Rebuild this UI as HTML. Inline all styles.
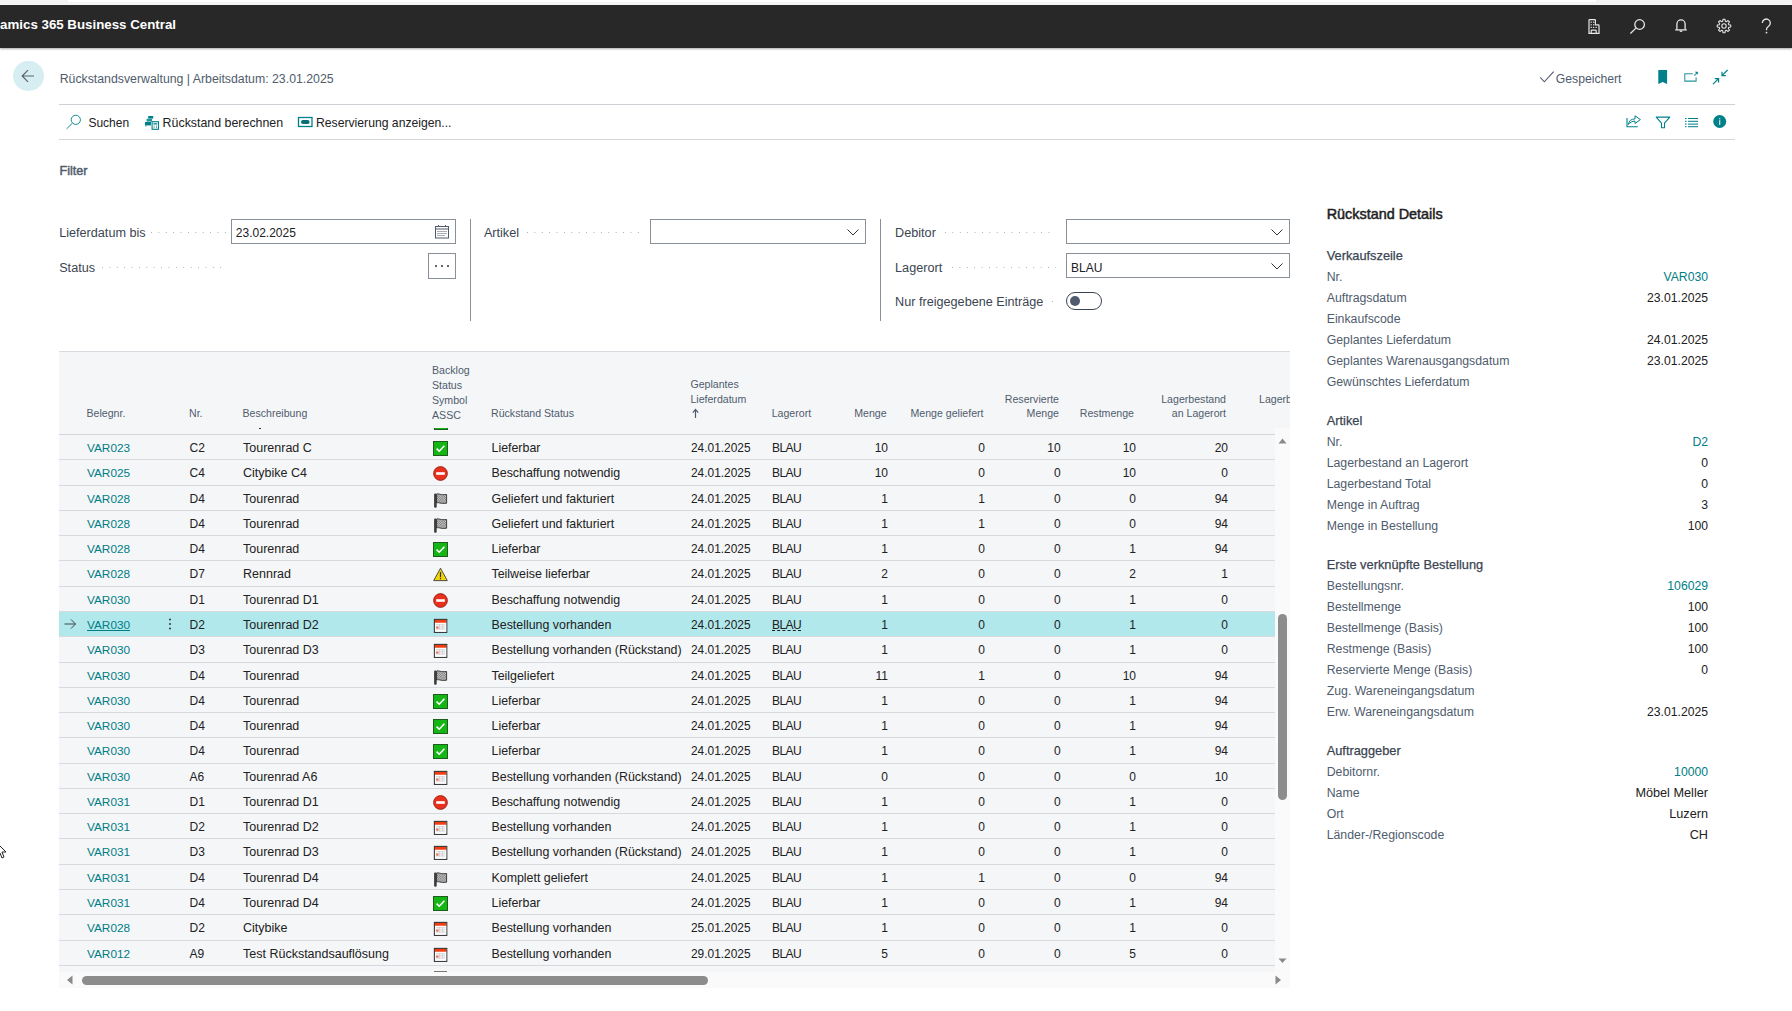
<!DOCTYPE html>
<html><head><meta charset="utf-8"><title>Rückstandsverwaltung</title>
<style>
html,body{margin:0;padding:0;}
body{width:1792px;height:1011px;overflow:hidden;position:relative;background:#fff;font-family:'Liberation Sans', sans-serif;}
.t{position:absolute;white-space:nowrap;line-height:20px;font-family:'Liberation Sans', sans-serif;}
svg{display:block}
</style></head><body>
<svg width="0" height="0" style="position:absolute"><defs><pattern id="chk" width="2.4" height="2.4" patternUnits="userSpaceOnUse"><rect width="2.4" height="2.4" fill="#d6d6d6"/><rect width="1.2" height="1.2" fill="#6e6e6e"/><rect x="1.2" y="1.2" width="1.2" height="1.2" fill="#6e6e6e"/></pattern></defs></svg>
<div style="position:absolute;left:0px;top:0px;width:1792px;height:5px;background:#f3f3f3"></div>
<div style="position:absolute;left:68px;top:0px;width:1528px;height:1.5px;background:#fff"></div>
<div style="position:absolute;left:0px;top:4px;width:1792px;height:1px;background:#fafafa"></div>
<div style="position:absolute;left:0px;top:5px;width:1792px;height:43px;background:#282828;box-shadow:0 1px 2px rgba(0,0,0,.35)"></div>
<div class="t" style="right:1616px;top:15px;font-size:13.3px;line-height:20px;color:#fff;font-weight:bold;white-space:nowrap">Dynamics 365 Business Central</div>
<svg style="position:absolute;left:1587px;top:18.2px" width="14" height="17" viewBox="0 0 14 17"><g fill="none" stroke="#e6e6e6" stroke-width="1.2"><path d="M2 15.4V2.2q0-.6.6-.6h5.2q.6 0 .6.6v4.6h3q.6 0 .6.6v8z"/><path d="M4.2 15.2v-2.2q0-.8.8-.8h3.4q.8 0 .8.8v2.2"/></g><g fill="#e6e6e6"><rect x="3.6" y="3.6" width="1.2" height="1.2"/><rect x="6" y="3.6" width="1.2" height="1.2"/><rect x="3.6" y="6.2" width="1.2" height="1.2"/><rect x="6" y="6.2" width="1.2" height="1.2"/><rect x="3.6" y="8.8" width="1.2" height="1.2"/><rect x="6" y="8.8" width="1.2" height="1.2"/><rect x="8.6" y="8.8" width="1.2" height="1.2"/></g></svg>
<svg style="position:absolute;left:1629px;top:17.5px" width="18" height="17" viewBox="0 0 18 17"><g fill="none" stroke="#e6e6e6" stroke-width="1.3"><circle cx="10.6" cy="6.5" r="4.8"/><path d="M7.2 9.9L1.4 15.5"/></g></svg>
<svg style="position:absolute;left:1673px;top:18.4px" width="16" height="15" viewBox="0 0 16 15"><g fill="none" stroke="#e6e6e6" stroke-width="1.3"><path d="M3.9 11.4V6a4.1 4.1 0 0 1 8.2 0v5.4"/><path d="M2.2 11.9h11.6"/></g><path d="M6.5 12.6h3a1.5 1.5 0 0 1-3 0z" fill="#e6e6e6"/></svg>
<svg style="position:absolute;left:1716px;top:18px" width="16" height="16" viewBox="0 0 16 16"><g fill="none" stroke="#e6e6e6" stroke-width="1.1"><polygon points="12.83,6.71 14.72,6.98 14.72,9.02 12.83,9.29 12.33,10.51 13.47,12.04 12.04,13.47 10.51,12.33 9.29,12.83 9.02,14.72 6.98,14.72 6.71,12.83 5.49,12.33 3.96,13.47 2.53,12.04 3.67,10.51 3.17,9.29 1.28,9.02 1.28,6.98 3.17,6.71 3.67,5.49 2.53,3.96 3.96,2.53 5.49,3.67 6.71,3.17 6.98,1.28 9.02,1.28 9.29,3.17 10.51,3.67 12.04,2.53 13.47,3.96 12.33,5.49" stroke-linejoin="round"/><circle cx="8" cy="8" r="2.2"/></g></svg>
<svg style="position:absolute;left:1760px;top:18px" width="13" height="16" viewBox="0 0 13 16"><g fill="none" stroke="#e6e6e6" stroke-width="1.3"><path d="M2.3 5a4 4 0 1 1 6.3 3.3c-1.3.9-2.1 1.6-2.1 3.2v.8"/></g><circle cx="6.5" cy="14.6" r=".9" fill="#e6e6e6"/></svg>
<div style="position:absolute;left:13.3px;top:61px;width:30.4px;height:30.4px;border-radius:50%;background:#d6eef1"></div>
<svg style="position:absolute;left:20px;top:68px" width="16" height="16" viewBox="0 0 16 16"><g fill="none" stroke="#5a6470" stroke-width="1.2"><path d="M14 8H2.5M8 2.2L2.2 8 8 13.8"/></g></svg>
<div class="t" style="left:59.70px;top:68.50px;font-size:12.3px;color:#505c6d;font-weight:normal;">Rückstandsverwaltung | Arbeitsdatum: 23.01.2025</div>
<svg style="position:absolute;left:1539px;top:70px" width="16" height="14" viewBox="0 0 16 14"><path d="M1.2 7.4l4.2 4.4L14.6 1.6" fill="none" stroke="#505c6d" stroke-width="1.1"/></svg>
<div class="t" style="left:1555.80px;top:68.50px;font-size:12.2px;color:#505c6d;font-weight:normal;">Gespeichert</div>
<svg style="position:absolute;left:1657px;top:69px" width="11" height="16" viewBox="0 0 11 16"><path d="M1.3 1h8.8v14L5.7 13 1.3 15z" fill="#00818a"/></svg>
<svg style="position:absolute;left:1683px;top:70px" width="17" height="14" viewBox="0 0 17 14"><g fill="none" stroke="#00818a" stroke-width="1.05" stroke-opacity="0.85"><path d="M9.7 3.7H1.8v7.4h11.3V7.3"/><path d="M11.2 5.6l2.8-2.7"/></g><path d="M11.8 1.8h3v3z" fill="#00818a"/></svg>
<svg style="position:absolute;left:1712px;top:69px" width="17" height="16" viewBox="0 0 17 16"><g fill="none" stroke="#00818a" stroke-width="1.2"><path d="M15.6 1L10 6.6M10 2.8v3.8h3.8"/><path d="M1 15.2l5.6-5.6M2.8 9.6h3.8v3.8"/></g></svg>
<div style="position:absolute;left:59px;top:104px;width:1676px;height:1px;background:#cdd1d5"></div>
<div style="position:absolute;left:59px;top:139px;width:1676px;height:1px;background:#d3d6da"></div>
<svg style="position:absolute;left:65px;top:113px" width="18" height="18" viewBox="0 0 18 18"><g fill="none" stroke="#1b8a94" stroke-width="1.0"><circle cx="10.8" cy="6.8" r="4.6"/><path d="M7.5 10.1L1.6 15.9"/></g></svg>
<div class="t" style="left:88.40px;top:112.50px;font-size:12.0px;color:#212121;font-weight:normal;">Suchen</div>
<svg style="position:absolute;left:144px;top:115px" width="16" height="15" viewBox="0 0 16 15"><g fill="#00818a"><rect x="4.2" y="1" width="5" height="2.6"/><rect x="2.6" y="3.8" width="5.4" height="2.8" opacity="0.85"/><rect x="1" y="7" width="6" height="3.4"/><rect x="1" y="10.6" width="2" height="0.8" opacity="0.6"/></g><rect x="8.1" y="6.7" width="6.4" height="7.6" fill="#fff" stroke="#00818a" stroke-width="1.1"/><g fill="#00818a" opacity="0.8"><rect x="9.4" y="8" width="3.8" height="1.6"/><rect x="9.6" y="10.6" width="1" height="1"/><rect x="12" y="10.6" width="1" height="1"/><rect x="9.6" y="12.2" width="1" height="1"/><rect x="12" y="12.2" width="1" height="1"/></g></svg>
<div class="t" style="left:162.60px;top:112.50px;font-size:12.4px;color:#212121;font-weight:normal;">Rückstand berechnen</div>
<svg style="position:absolute;left:297px;top:116px" width="17" height="12" viewBox="0 0 17 12"><rect x="1.5" y="1.5" width="13.5" height="9" fill="none" stroke="#00818a" stroke-width="1.3"/><rect x="4" y="4" width="8.6" height="4" rx="2" fill="#0b6f77"/></svg>
<div class="t" style="left:316.00px;top:112.50px;font-size:12.2px;color:#212121;font-weight:normal;">Reservierung anzeigen...</div>
<svg style="position:absolute;left:1625px;top:114px" width="17" height="15" viewBox="0 0 17 15"><path d="M2 4v8.8h10.8" fill="none" stroke="#00818a" stroke-width="1.1"/><path d="M3.4 10.4C3.9 6.9 6.2 4.9 10 4.9V1.8L15.4 5.6 10 9.5V7.1C7.4 7.1 5.3 8.3 3.4 10.4z" fill="none" stroke="#00818a" stroke-width="1" stroke-linejoin="round"/></svg>
<svg style="position:absolute;left:1655px;top:115px" width="16" height="14" viewBox="0 0 16 14"><path d="M1.2 2.1h13.6L9.5 8.1v4.7H6.5V8.1z" fill="none" stroke="#00818a" stroke-width="1.1" stroke-linejoin="round"/></svg>
<svg style="position:absolute;left:1684px;top:117px" width="15" height="11" viewBox="0 0 15 11"><g fill="#00818a"><rect x="1" y="1" width="1.6" height="1"/><rect x="4" y="1" width="10" height="1"/><rect x="1" y="3.8" width="1.6" height="1"/><rect x="4" y="3.8" width="10" height="1"/><rect x="1" y="6.6" width="1.6" height="1"/><rect x="4" y="6.6" width="10" height="1"/><rect x="1" y="9.2" width="1.6" height="1"/><rect x="4" y="9.2" width="10" height="1"/></g></svg>
<svg style="position:absolute;left:1713px;top:115px" width="14" height="14" viewBox="0 0 14 14"><circle cx="6.7" cy="6.5" r="6.5" fill="#00818a"/><rect x="6.1" y="3.2" width="1.2" height="1.2" fill="#cfe9ec"/><rect x="6.1" y="5.2" width="1.2" height="4.8" fill="#cfe9ec"/></svg>
<div class="t" style="left:59.50px;top:160.50px;font-size:12.6px;color:#505c6d;font-weight:normal;-webkit-text-stroke:0.45px #505c6d;">Filter</div>
<div class="t" style="left:59.20px;top:222.50px;font-size:12.65px;color:#3b4552;font-weight:normal;">Lieferdatum bis</div>
<div style="position:absolute;left:151px;top:232px;width:75px;height:1px;background-image:linear-gradient(to right,#a9aeb4 1px,transparent 1px);background-size:7.4px 1px"></div>
<div style="position:absolute;left:231px;top:219px;width:223px;height:23px;border:1px solid #8a9099;background:#fff"></div>
<div class="t" style="left:235.80px;top:222.50px;font-size:12px;color:#212121;font-weight:normal;">23.02.2025</div>
<svg style="position:absolute;left:434px;top:224px" width="16" height="16" viewBox="0 0 16 16"><g fill="none" stroke="#505c6d" stroke-width="1"><rect x="1.5" y="2.5" width="13" height="11.5"/><path d="M1.5 5h13"/><path d="M4.5 1v2M11.5 1v2"/></g><g fill="#505c6d"><rect x="3.5" y="7" width="1" height="1"/><rect x="5.5" y="7" width="1" height="1"/><rect x="7.5" y="7" width="1" height="1"/><rect x="9.5" y="7" width="1" height="1"/><rect x="11.5" y="7" width="1" height="1"/><rect x="3.5" y="9" width="1" height="1"/><rect x="5.5" y="9" width="1" height="1"/><rect x="7.5" y="9" width="1" height="1"/><rect x="9.5" y="9" width="1" height="1"/><rect x="11.5" y="9" width="1" height="1"/><rect x="3.5" y="11" width="1" height="1"/><rect x="5.5" y="11" width="1" height="1"/><rect x="7.5" y="11" width="1" height="1"/><rect x="9.5" y="11" width="1" height="1"/></g></svg>
<div class="t" style="left:59.20px;top:257.50px;font-size:12.65px;color:#3b4552;font-weight:normal;">Status</div>
<div style="position:absolute;left:102px;top:267px;width:124px;height:1px;background-image:linear-gradient(to right,#a9aeb4 1px,transparent 1px);background-size:7.4px 1px"></div>
<div style="position:absolute;left:428px;top:253px;width:26px;height:24px;border:1px solid #8a9099;background:#fff"></div>
<svg style="position:absolute;left:432px;top:261px" width="20" height="10" viewBox="0 0 20 10"><g fill="#333"><circle cx="4" cy="5" r="1"/><circle cx="10" cy="5" r="1"/><circle cx="16" cy="5" r="1"/></g></svg>
<div style="position:absolute;left:470px;top:219px;width:1px;height:102px;background:#8a9099"></div>
<div class="t" style="left:483.90px;top:222.50px;font-size:12.65px;color:#3b4552;font-weight:normal;">Artikel</div>
<div style="position:absolute;left:527px;top:232px;width:118px;height:1px;background-image:linear-gradient(to right,#a9aeb4 1px,transparent 1px);background-size:7.4px 1px"></div>
<div style="position:absolute;left:650px;top:219px;width:214px;height:23px;border:1px solid #8a9099;background:#fff"></div>
<svg style="position:absolute;left:846px;top:227px" width="14" height="10" viewBox="0 0 14 10"><path d="M1.5 2.5l5.5 5.5 5.5-5.5" fill="none" stroke="#333" stroke-width="1"/></svg>
<div style="position:absolute;left:880px;top:219px;width:1px;height:102px;background:#8a9099"></div>
<div class="t" style="left:895.10px;top:222.50px;font-size:12.65px;color:#3b4552;font-weight:normal;">Debitor</div>
<div style="position:absolute;left:945px;top:232px;width:111px;height:1px;background-image:linear-gradient(to right,#a9aeb4 1px,transparent 1px);background-size:7.4px 1px"></div>
<div style="position:absolute;left:1066px;top:219px;width:222px;height:23px;border:1px solid #8a9099;background:#fff"></div>
<svg style="position:absolute;left:1270px;top:227px" width="14" height="10" viewBox="0 0 14 10"><path d="M1.5 2.5l5.5 5.5 5.5-5.5" fill="none" stroke="#333" stroke-width="1"/></svg>
<div class="t" style="left:895.10px;top:257.50px;font-size:12.65px;color:#3b4552;font-weight:normal;">Lagerort</div>
<div style="position:absolute;left:952px;top:267px;width:104px;height:1px;background-image:linear-gradient(to right,#a9aeb4 1px,transparent 1px);background-size:7.4px 1px"></div>
<div style="position:absolute;left:1066px;top:253px;width:222px;height:23px;border:1px solid #8a9099;background:#fff"></div>
<div class="t" style="left:1071.00px;top:257.50px;font-size:12px;color:#212121;font-weight:normal;">BLAU</div>
<svg style="position:absolute;left:1270px;top:261px" width="14" height="10" viewBox="0 0 14 10"><path d="M1.5 2.5l5.5 5.5 5.5-5.5" fill="none" stroke="#333" stroke-width="1"/></svg>
<div class="t" style="left:895.10px;top:291.50px;font-size:12.65px;color:#3b4552;font-weight:normal;">Nur freigegebene Einträge</div>
<div style="position:absolute;left:1052px;top:301px;width:4px;height:1px;background-image:linear-gradient(to right,#a9aeb4 1px,transparent 1px);background-size:7.4px 1px"></div>
<div style="position:absolute;left:1066px;top:292px;width:34px;height:16px;border:1px solid #3b4552;border-radius:9px;background:#fff"></div>
<div style="position:absolute;left:1069.5px;top:295.5px;width:10.5px;height:10.5px;border-radius:50%;background:#505c6d"></div>
<div style="position:absolute;left:59px;top:351px;width:1231px;height:637px;background:#f5f6f8"></div>
<div style="position:absolute;left:59px;top:351px;width:1231px;height:1px;background:#d8dbdf"></div>
<div class="t" style="left:86.50px;top:403.30px;font-size:10.6px;color:#505c6d;font-weight:normal;">Belegnr.</div>
<div class="t" style="left:189.00px;top:403.30px;font-size:10.6px;color:#505c6d;font-weight:normal;">Nr.</div>
<div class="t" style="left:242.50px;top:403.30px;font-size:10.6px;color:#505c6d;font-weight:normal;">Beschreibung</div>
<div class="t" style="left:432.00px;top:360.30px;font-size:10.6px;color:#505c6d;font-weight:normal;">Backlog</div>
<div class="t" style="left:432.00px;top:375.30px;font-size:10.6px;color:#505c6d;font-weight:normal;">Status</div>
<div class="t" style="left:432.00px;top:390.30px;font-size:10.6px;color:#505c6d;font-weight:normal;">Symbol</div>
<div class="t" style="left:432.00px;top:405.30px;font-size:10.6px;color:#505c6d;font-weight:normal;">ASSC</div>
<div class="t" style="left:491.00px;top:403.30px;font-size:10.6px;color:#505c6d;font-weight:normal;">Rückstand Status</div>
<div class="t" style="left:690.40px;top:373.80px;font-size:10.6px;color:#505c6d;font-weight:normal;">Geplantes</div>
<div class="t" style="left:690.40px;top:388.80px;font-size:10.6px;color:#505c6d;font-weight:normal;">Lieferdatum</div>
<svg style="position:absolute;left:691px;top:407.5px" width="9" height="11" viewBox="0 0 9 11"><path d="M4.5 10V2M1.8 4.6L4.5 1.4 7.2 4.6" fill="none" stroke="#505c6d" stroke-width="1.2"/></svg>
<div class="t" style="left:771.70px;top:403.30px;font-size:10.6px;color:#505c6d;font-weight:normal;">Lagerort</div>
<div class="t" style="right:905.40px;top:403.30px;font-size:10.6px;color:#505c6d;font-weight:normal;text-align:right;">Menge</div>
<div class="t" style="right:808.50px;top:403.30px;font-size:10.6px;color:#505c6d;font-weight:normal;text-align:right;">Menge geliefert</div>
<div class="t" style="right:733.00px;top:388.80px;font-size:10.6px;color:#505c6d;font-weight:normal;text-align:right;">Reservierte</div>
<div class="t" style="right:733.00px;top:403.30px;font-size:10.6px;color:#505c6d;font-weight:normal;text-align:right;">Menge</div>
<div class="t" style="right:658.00px;top:403.30px;font-size:10.6px;color:#505c6d;font-weight:normal;text-align:right;">Restmenge</div>
<div class="t" style="right:566.00px;top:388.80px;font-size:10.6px;color:#505c6d;font-weight:normal;text-align:right;">Lagerbestand</div>
<div class="t" style="right:566.00px;top:403.30px;font-size:10.6px;color:#505c6d;font-weight:normal;text-align:right;">an Lagerort</div>
<div style="position:absolute;left:1259px;top:388.8px;width:31px;height:20px;overflow:hidden;white-space:nowrap;font-family:'Liberation Sans', sans-serif;font-size:10.6px;line-height:20px;color:#505c6d">Lagerbestand</div>
<div style="position:absolute;left:59px;top:434px;width:1216px;height:1px;background:#d3d6da"></div>
<div style="position:absolute;left:59px;top:459px;width:1216px;height:1px;background:#d6d9dd"></div>
<div class="t" style="left:87.00px;top:437.80px;font-size:11.8px;color:#007d85;font-weight:normal;">VAR023</div>
<div class="t" style="left:189.50px;top:437.80px;font-size:12px;color:#212121;font-weight:normal;">C2</div>
<div class="t" style="left:243.00px;top:437.80px;font-size:12.5px;color:#212121;font-weight:normal;">Tourenrad C</div>
<svg style="position:absolute;left:433px;top:440.6px" width="15" height="15" viewBox="0 0 15 15"><rect x="0.5" y="0.5" width="14" height="14" fill="#16b516" stroke="#1d5e1d" stroke-width="1"/><path d="M3.6 7.6l2.6 2.6 5.2-5.4" fill="none" stroke="#fff" stroke-width="1.6"/></svg>
<div class="t" style="left:491.50px;top:437.80px;font-size:12.4px;color:#212121;font-weight:normal;">Lieferbar</div>
<div class="t" style="left:691.00px;top:437.80px;font-size:11.9px;color:#212121;font-weight:normal;">24.01.2025</div>
<div class="t" style="left:772.00px;top:437.80px;font-size:12px;color:#212121;font-weight:normal;letter-spacing:-0.55px;">BLAU</div>
<div class="t" style="right:904.00px;top:437.80px;font-size:12px;color:#212121;font-weight:normal;text-align:right;">10</div>
<div class="t" style="right:807.00px;top:437.80px;font-size:12px;color:#212121;font-weight:normal;text-align:right;">0</div>
<div class="t" style="right:731.40px;top:437.80px;font-size:12px;color:#212121;font-weight:normal;text-align:right;">10</div>
<div class="t" style="right:656.00px;top:437.80px;font-size:12px;color:#212121;font-weight:normal;text-align:right;">10</div>
<div class="t" style="right:564.00px;top:437.80px;font-size:12px;color:#212121;font-weight:normal;text-align:right;">20</div>
<div style="position:absolute;left:59px;top:485px;width:1216px;height:1px;background:#d6d9dd"></div>
<div class="t" style="left:87.00px;top:463.30px;font-size:11.8px;color:#007d85;font-weight:normal;">VAR025</div>
<div class="t" style="left:189.50px;top:463.30px;font-size:12px;color:#212121;font-weight:normal;">C4</div>
<div class="t" style="left:243.00px;top:463.30px;font-size:12.5px;color:#212121;font-weight:normal;">Citybike C4</div>
<svg style="position:absolute;left:433px;top:465.6px" width="15" height="15" viewBox="0 0 15 15"><circle cx="7.5" cy="7.5" r="6.9" fill="#e8301c" stroke="#8a1a10" stroke-width="0.8"/><rect x="3.2" y="6.2" width="8.6" height="2.6" fill="#fff"/></svg>
<div class="t" style="left:491.50px;top:463.30px;font-size:12.4px;color:#212121;font-weight:normal;">Beschaffung notwendig</div>
<div class="t" style="left:691.00px;top:463.30px;font-size:11.9px;color:#212121;font-weight:normal;">24.01.2025</div>
<div class="t" style="left:772.00px;top:463.30px;font-size:12px;color:#212121;font-weight:normal;letter-spacing:-0.55px;">BLAU</div>
<div class="t" style="right:904.00px;top:463.30px;font-size:12px;color:#212121;font-weight:normal;text-align:right;">10</div>
<div class="t" style="right:807.00px;top:463.30px;font-size:12px;color:#212121;font-weight:normal;text-align:right;">0</div>
<div class="t" style="right:731.40px;top:463.30px;font-size:12px;color:#212121;font-weight:normal;text-align:right;">0</div>
<div class="t" style="right:656.00px;top:463.30px;font-size:12px;color:#212121;font-weight:normal;text-align:right;">10</div>
<div class="t" style="right:564.00px;top:463.30px;font-size:12px;color:#212121;font-weight:normal;text-align:right;">0</div>
<div style="position:absolute;left:59px;top:510px;width:1216px;height:1px;background:#d6d9dd"></div>
<div class="t" style="left:87.00px;top:488.80px;font-size:11.8px;color:#007d85;font-weight:normal;">VAR028</div>
<div class="t" style="left:189.50px;top:488.80px;font-size:12px;color:#212121;font-weight:normal;">D4</div>
<div class="t" style="left:243.00px;top:488.80px;font-size:12.5px;color:#212121;font-weight:normal;">Tourenrad</div>
<svg style="position:absolute;left:433px;top:491.6px" width="15" height="16" viewBox="0 0 15 16"><rect x="1.1" y="1.4" width="2.6" height="14.4" rx="1.1" fill="#3c3c3c"/><path d="M3.6 2.2c1.2-.7 2.4-.2 3.6.1 1.6.4 3.2.4 6.4 0.2v8.7c-3 .4-5.2.2-6.6-.2-1.2-.3-2.2-.5-3.4 0z" fill="url(#chk)" stroke="#2e2e2e" stroke-width="0.9"/></svg>
<div class="t" style="left:491.50px;top:488.80px;font-size:12.4px;color:#212121;font-weight:normal;">Geliefert und fakturiert</div>
<div class="t" style="left:691.00px;top:488.80px;font-size:11.9px;color:#212121;font-weight:normal;">24.01.2025</div>
<div class="t" style="left:772.00px;top:488.80px;font-size:12px;color:#212121;font-weight:normal;letter-spacing:-0.55px;">BLAU</div>
<div class="t" style="right:904.00px;top:488.80px;font-size:12px;color:#212121;font-weight:normal;text-align:right;">1</div>
<div class="t" style="right:807.00px;top:488.80px;font-size:12px;color:#212121;font-weight:normal;text-align:right;">1</div>
<div class="t" style="right:731.40px;top:488.80px;font-size:12px;color:#212121;font-weight:normal;text-align:right;">0</div>
<div class="t" style="right:656.00px;top:488.80px;font-size:12px;color:#212121;font-weight:normal;text-align:right;">0</div>
<div class="t" style="right:564.00px;top:488.80px;font-size:12px;color:#212121;font-weight:normal;text-align:right;">94</div>
<div style="position:absolute;left:59px;top:535px;width:1216px;height:1px;background:#d6d9dd"></div>
<div class="t" style="left:87.00px;top:513.80px;font-size:11.8px;color:#007d85;font-weight:normal;">VAR028</div>
<div class="t" style="left:189.50px;top:513.80px;font-size:12px;color:#212121;font-weight:normal;">D4</div>
<div class="t" style="left:243.00px;top:513.80px;font-size:12.5px;color:#212121;font-weight:normal;">Tourenrad</div>
<svg style="position:absolute;left:433px;top:516.6px" width="15" height="16" viewBox="0 0 15 16"><rect x="1.1" y="1.4" width="2.6" height="14.4" rx="1.1" fill="#3c3c3c"/><path d="M3.6 2.2c1.2-.7 2.4-.2 3.6.1 1.6.4 3.2.4 6.4 0.2v8.7c-3 .4-5.2.2-6.6-.2-1.2-.3-2.2-.5-3.4 0z" fill="url(#chk)" stroke="#2e2e2e" stroke-width="0.9"/></svg>
<div class="t" style="left:491.50px;top:513.80px;font-size:12.4px;color:#212121;font-weight:normal;">Geliefert und fakturiert</div>
<div class="t" style="left:691.00px;top:513.80px;font-size:11.9px;color:#212121;font-weight:normal;">24.01.2025</div>
<div class="t" style="left:772.00px;top:513.80px;font-size:12px;color:#212121;font-weight:normal;letter-spacing:-0.55px;">BLAU</div>
<div class="t" style="right:904.00px;top:513.80px;font-size:12px;color:#212121;font-weight:normal;text-align:right;">1</div>
<div class="t" style="right:807.00px;top:513.80px;font-size:12px;color:#212121;font-weight:normal;text-align:right;">1</div>
<div class="t" style="right:731.40px;top:513.80px;font-size:12px;color:#212121;font-weight:normal;text-align:right;">0</div>
<div class="t" style="right:656.00px;top:513.80px;font-size:12px;color:#212121;font-weight:normal;text-align:right;">0</div>
<div class="t" style="right:564.00px;top:513.80px;font-size:12px;color:#212121;font-weight:normal;text-align:right;">94</div>
<div style="position:absolute;left:59px;top:560px;width:1216px;height:1px;background:#d6d9dd"></div>
<div class="t" style="left:87.00px;top:538.80px;font-size:11.8px;color:#007d85;font-weight:normal;">VAR028</div>
<div class="t" style="left:189.50px;top:538.80px;font-size:12px;color:#212121;font-weight:normal;">D4</div>
<div class="t" style="left:243.00px;top:538.80px;font-size:12.5px;color:#212121;font-weight:normal;">Tourenrad</div>
<svg style="position:absolute;left:433px;top:541.6px" width="15" height="15" viewBox="0 0 15 15"><rect x="0.5" y="0.5" width="14" height="14" fill="#16b516" stroke="#1d5e1d" stroke-width="1"/><path d="M3.6 7.6l2.6 2.6 5.2-5.4" fill="none" stroke="#fff" stroke-width="1.6"/></svg>
<div class="t" style="left:491.50px;top:538.80px;font-size:12.4px;color:#212121;font-weight:normal;">Lieferbar</div>
<div class="t" style="left:691.00px;top:538.80px;font-size:11.9px;color:#212121;font-weight:normal;">24.01.2025</div>
<div class="t" style="left:772.00px;top:538.80px;font-size:12px;color:#212121;font-weight:normal;letter-spacing:-0.55px;">BLAU</div>
<div class="t" style="right:904.00px;top:538.80px;font-size:12px;color:#212121;font-weight:normal;text-align:right;">1</div>
<div class="t" style="right:807.00px;top:538.80px;font-size:12px;color:#212121;font-weight:normal;text-align:right;">0</div>
<div class="t" style="right:731.40px;top:538.80px;font-size:12px;color:#212121;font-weight:normal;text-align:right;">0</div>
<div class="t" style="right:656.00px;top:538.80px;font-size:12px;color:#212121;font-weight:normal;text-align:right;">1</div>
<div class="t" style="right:564.00px;top:538.80px;font-size:12px;color:#212121;font-weight:normal;text-align:right;">94</div>
<div style="position:absolute;left:59px;top:586px;width:1216px;height:1px;background:#d6d9dd"></div>
<div class="t" style="left:87.00px;top:564.30px;font-size:11.8px;color:#007d85;font-weight:normal;">VAR028</div>
<div class="t" style="left:189.50px;top:564.30px;font-size:12px;color:#212121;font-weight:normal;">D7</div>
<div class="t" style="left:243.00px;top:564.30px;font-size:12.5px;color:#212121;font-weight:normal;">Rennrad</div>
<svg style="position:absolute;left:433px;top:566.6px" width="15" height="15" viewBox="0 0 15 15"><path d="M7.5 1.2L14.3 13.6H0.7z" fill="#f2d40a" stroke="#3c3c3c" stroke-width="0.9" stroke-linejoin="round"/><rect x="6.9" y="5" width="1.2" height="5.2" fill="#333"/><rect x="6.9" y="11" width="1.2" height="1.2" fill="#333"/></svg>
<div class="t" style="left:491.50px;top:564.30px;font-size:12.4px;color:#212121;font-weight:normal;">Teilweise lieferbar</div>
<div class="t" style="left:691.00px;top:564.30px;font-size:11.9px;color:#212121;font-weight:normal;">24.01.2025</div>
<div class="t" style="left:772.00px;top:564.30px;font-size:12px;color:#212121;font-weight:normal;letter-spacing:-0.55px;">BLAU</div>
<div class="t" style="right:904.00px;top:564.30px;font-size:12px;color:#212121;font-weight:normal;text-align:right;">2</div>
<div class="t" style="right:807.00px;top:564.30px;font-size:12px;color:#212121;font-weight:normal;text-align:right;">0</div>
<div class="t" style="right:731.40px;top:564.30px;font-size:12px;color:#212121;font-weight:normal;text-align:right;">0</div>
<div class="t" style="right:656.00px;top:564.30px;font-size:12px;color:#212121;font-weight:normal;text-align:right;">2</div>
<div class="t" style="right:564.00px;top:564.30px;font-size:12px;color:#212121;font-weight:normal;text-align:right;">1</div>
<div style="position:absolute;left:59px;top:611px;width:1216px;height:1px;background:#d6d9dd"></div>
<div class="t" style="left:87.00px;top:589.80px;font-size:11.8px;color:#007d85;font-weight:normal;">VAR030</div>
<div class="t" style="left:189.50px;top:589.80px;font-size:12px;color:#212121;font-weight:normal;">D1</div>
<div class="t" style="left:243.00px;top:589.80px;font-size:12.5px;color:#212121;font-weight:normal;">Tourenrad D1</div>
<svg style="position:absolute;left:433px;top:592.6px" width="15" height="15" viewBox="0 0 15 15"><circle cx="7.5" cy="7.5" r="6.9" fill="#e8301c" stroke="#8a1a10" stroke-width="0.8"/><rect x="3.2" y="6.2" width="8.6" height="2.6" fill="#fff"/></svg>
<div class="t" style="left:491.50px;top:589.80px;font-size:12.4px;color:#212121;font-weight:normal;">Beschaffung notwendig</div>
<div class="t" style="left:691.00px;top:589.80px;font-size:11.9px;color:#212121;font-weight:normal;">24.01.2025</div>
<div class="t" style="left:772.00px;top:589.80px;font-size:12px;color:#212121;font-weight:normal;letter-spacing:-0.55px;">BLAU</div>
<div class="t" style="right:904.00px;top:589.80px;font-size:12px;color:#212121;font-weight:normal;text-align:right;">1</div>
<div class="t" style="right:807.00px;top:589.80px;font-size:12px;color:#212121;font-weight:normal;text-align:right;">0</div>
<div class="t" style="right:731.40px;top:589.80px;font-size:12px;color:#212121;font-weight:normal;text-align:right;">0</div>
<div class="t" style="right:656.00px;top:589.80px;font-size:12px;color:#212121;font-weight:normal;text-align:right;">1</div>
<div class="t" style="right:564.00px;top:589.80px;font-size:12px;color:#212121;font-weight:normal;text-align:right;">0</div>
<div style="position:absolute;left:59px;top:612px;width:1216px;height:24px;background:#b1e8ec"></div>
<div style="position:absolute;left:59px;top:636px;width:1216px;height:1px;background:#d6d9dd"></div>
<div class="t" style="left:87.00px;top:614.80px;font-size:11.8px;color:#007d85;font-weight:normal;text-decoration:underline;">VAR030</div>
<svg style="position:absolute;left:63px;top:617px" width="14" height="14" viewBox="0 0 14 14"><path d="M1.5 7h11M8 2.5l4.5 4.5L8 11.5" fill="none" stroke="#444" stroke-width="1"/></svg>
<svg style="position:absolute;left:166px;top:616px" width="8" height="16" viewBox="0 0 8 16"><g fill="#333"><circle cx="4" cy="3.5" r="1"/><circle cx="4" cy="8" r="1"/><circle cx="4" cy="12.5" r="1"/></g></svg>
<div class="t" style="left:189.50px;top:614.80px;font-size:12px;color:#212121;font-weight:normal;">D2</div>
<div class="t" style="left:243.00px;top:614.80px;font-size:12.5px;color:#212121;font-weight:normal;">Tourenrad D2</div>
<svg style="position:absolute;left:433px;top:617.6px" width="15" height="15" viewBox="0 0 15 15"><rect x="1.4" y="1.4" width="12.4" height="13" fill="#f4f4f4" stroke="#333" stroke-width="1.1"/><rect x="1.95" y="1.95" width="11.3" height="2.9" fill="#f23c12"/><rect x="1.95" y="4.85" width="11.3" height="8.9" fill="#fafafa"/><g fill="#d0d0d0"><rect x="3" y="6.3" width="9" height="0.9"/><rect x="3" y="8.4" width="9" height="0.9"/><rect x="3" y="10.5" width="9" height="0.9"/><rect x="6" y="6" width="0.8" height="5.6"/><rect x="9" y="6" width="0.8" height="5.6"/></g><rect x="3.2" y="8.6" width="2.2" height="2" fill="#f0664a"/></svg>
<div class="t" style="left:491.50px;top:614.80px;font-size:12.4px;color:#212121;font-weight:normal;">Bestellung vorhanden</div>
<div class="t" style="left:691.00px;top:614.80px;font-size:11.9px;color:#212121;font-weight:normal;">24.01.2025</div>
<div class="t" style="left:772.00px;top:614.80px;font-size:12px;color:#212121;font-weight:normal;letter-spacing:-0.55px;text-decoration:underline dashed;">BLAU</div>
<div class="t" style="right:904.00px;top:614.80px;font-size:12px;color:#212121;font-weight:normal;text-align:right;">1</div>
<div class="t" style="right:807.00px;top:614.80px;font-size:12px;color:#212121;font-weight:normal;text-align:right;">0</div>
<div class="t" style="right:731.40px;top:614.80px;font-size:12px;color:#212121;font-weight:normal;text-align:right;">0</div>
<div class="t" style="right:656.00px;top:614.80px;font-size:12px;color:#212121;font-weight:normal;text-align:right;">1</div>
<div class="t" style="right:564.00px;top:614.80px;font-size:12px;color:#212121;font-weight:normal;text-align:right;">0</div>
<div style="position:absolute;left:59px;top:662px;width:1216px;height:1px;background:#d6d9dd"></div>
<div class="t" style="left:87.00px;top:640.30px;font-size:11.8px;color:#007d85;font-weight:normal;">VAR030</div>
<div class="t" style="left:189.50px;top:640.30px;font-size:12px;color:#212121;font-weight:normal;">D3</div>
<div class="t" style="left:243.00px;top:640.30px;font-size:12.5px;color:#212121;font-weight:normal;">Tourenrad D3</div>
<svg style="position:absolute;left:433px;top:642.6px" width="15" height="15" viewBox="0 0 15 15"><rect x="1.4" y="1.4" width="12.4" height="13" fill="#f4f4f4" stroke="#333" stroke-width="1.1"/><rect x="1.95" y="1.95" width="11.3" height="2.9" fill="#f23c12"/><rect x="1.95" y="4.85" width="11.3" height="8.9" fill="#fafafa"/><g fill="#d0d0d0"><rect x="3" y="6.3" width="9" height="0.9"/><rect x="3" y="8.4" width="9" height="0.9"/><rect x="3" y="10.5" width="9" height="0.9"/><rect x="6" y="6" width="0.8" height="5.6"/><rect x="9" y="6" width="0.8" height="5.6"/></g><rect x="3.2" y="8.6" width="2.2" height="2" fill="#f0664a"/></svg>
<div class="t" style="left:491.50px;top:640.30px;font-size:12.4px;color:#212121;font-weight:normal;">Bestellung vorhanden (Rückstand)</div>
<div class="t" style="left:691.00px;top:640.30px;font-size:11.9px;color:#212121;font-weight:normal;">24.01.2025</div>
<div class="t" style="left:772.00px;top:640.30px;font-size:12px;color:#212121;font-weight:normal;letter-spacing:-0.55px;">BLAU</div>
<div class="t" style="right:904.00px;top:640.30px;font-size:12px;color:#212121;font-weight:normal;text-align:right;">1</div>
<div class="t" style="right:807.00px;top:640.30px;font-size:12px;color:#212121;font-weight:normal;text-align:right;">0</div>
<div class="t" style="right:731.40px;top:640.30px;font-size:12px;color:#212121;font-weight:normal;text-align:right;">0</div>
<div class="t" style="right:656.00px;top:640.30px;font-size:12px;color:#212121;font-weight:normal;text-align:right;">1</div>
<div class="t" style="right:564.00px;top:640.30px;font-size:12px;color:#212121;font-weight:normal;text-align:right;">0</div>
<div style="position:absolute;left:59px;top:687px;width:1216px;height:1px;background:#d6d9dd"></div>
<div class="t" style="left:87.00px;top:665.80px;font-size:11.8px;color:#007d85;font-weight:normal;">VAR030</div>
<div class="t" style="left:189.50px;top:665.80px;font-size:12px;color:#212121;font-weight:normal;">D4</div>
<div class="t" style="left:243.00px;top:665.80px;font-size:12.5px;color:#212121;font-weight:normal;">Tourenrad</div>
<svg style="position:absolute;left:433px;top:668.6px" width="15" height="16" viewBox="0 0 15 16"><rect x="1.1" y="1.4" width="2.6" height="14.4" rx="1.1" fill="#3c3c3c"/><path d="M3.6 2.2c1.2-.7 2.4-.2 3.6.1 1.6.4 3.2.4 6.4 0.2v8.7c-3 .4-5.2.2-6.6-.2-1.2-.3-2.2-.5-3.4 0z" fill="url(#chk)" stroke="#2e2e2e" stroke-width="0.9"/></svg>
<div class="t" style="left:491.50px;top:665.80px;font-size:12.4px;color:#212121;font-weight:normal;">Teilgeliefert</div>
<div class="t" style="left:691.00px;top:665.80px;font-size:11.9px;color:#212121;font-weight:normal;">24.01.2025</div>
<div class="t" style="left:772.00px;top:665.80px;font-size:12px;color:#212121;font-weight:normal;letter-spacing:-0.55px;">BLAU</div>
<div class="t" style="right:904.00px;top:665.80px;font-size:12px;color:#212121;font-weight:normal;text-align:right;">11</div>
<div class="t" style="right:807.00px;top:665.80px;font-size:12px;color:#212121;font-weight:normal;text-align:right;">1</div>
<div class="t" style="right:731.40px;top:665.80px;font-size:12px;color:#212121;font-weight:normal;text-align:right;">0</div>
<div class="t" style="right:656.00px;top:665.80px;font-size:12px;color:#212121;font-weight:normal;text-align:right;">10</div>
<div class="t" style="right:564.00px;top:665.80px;font-size:12px;color:#212121;font-weight:normal;text-align:right;">94</div>
<div style="position:absolute;left:59px;top:712px;width:1216px;height:1px;background:#d6d9dd"></div>
<div class="t" style="left:87.00px;top:690.80px;font-size:11.8px;color:#007d85;font-weight:normal;">VAR030</div>
<div class="t" style="left:189.50px;top:690.80px;font-size:12px;color:#212121;font-weight:normal;">D4</div>
<div class="t" style="left:243.00px;top:690.80px;font-size:12.5px;color:#212121;font-weight:normal;">Tourenrad</div>
<svg style="position:absolute;left:433px;top:693.6px" width="15" height="15" viewBox="0 0 15 15"><rect x="0.5" y="0.5" width="14" height="14" fill="#16b516" stroke="#1d5e1d" stroke-width="1"/><path d="M3.6 7.6l2.6 2.6 5.2-5.4" fill="none" stroke="#fff" stroke-width="1.6"/></svg>
<div class="t" style="left:491.50px;top:690.80px;font-size:12.4px;color:#212121;font-weight:normal;">Lieferbar</div>
<div class="t" style="left:691.00px;top:690.80px;font-size:11.9px;color:#212121;font-weight:normal;">24.01.2025</div>
<div class="t" style="left:772.00px;top:690.80px;font-size:12px;color:#212121;font-weight:normal;letter-spacing:-0.55px;">BLAU</div>
<div class="t" style="right:904.00px;top:690.80px;font-size:12px;color:#212121;font-weight:normal;text-align:right;">1</div>
<div class="t" style="right:807.00px;top:690.80px;font-size:12px;color:#212121;font-weight:normal;text-align:right;">0</div>
<div class="t" style="right:731.40px;top:690.80px;font-size:12px;color:#212121;font-weight:normal;text-align:right;">0</div>
<div class="t" style="right:656.00px;top:690.80px;font-size:12px;color:#212121;font-weight:normal;text-align:right;">1</div>
<div class="t" style="right:564.00px;top:690.80px;font-size:12px;color:#212121;font-weight:normal;text-align:right;">94</div>
<div style="position:absolute;left:59px;top:737px;width:1216px;height:1px;background:#d6d9dd"></div>
<div class="t" style="left:87.00px;top:715.80px;font-size:11.8px;color:#007d85;font-weight:normal;">VAR030</div>
<div class="t" style="left:189.50px;top:715.80px;font-size:12px;color:#212121;font-weight:normal;">D4</div>
<div class="t" style="left:243.00px;top:715.80px;font-size:12.5px;color:#212121;font-weight:normal;">Tourenrad</div>
<svg style="position:absolute;left:433px;top:718.6px" width="15" height="15" viewBox="0 0 15 15"><rect x="0.5" y="0.5" width="14" height="14" fill="#16b516" stroke="#1d5e1d" stroke-width="1"/><path d="M3.6 7.6l2.6 2.6 5.2-5.4" fill="none" stroke="#fff" stroke-width="1.6"/></svg>
<div class="t" style="left:491.50px;top:715.80px;font-size:12.4px;color:#212121;font-weight:normal;">Lieferbar</div>
<div class="t" style="left:691.00px;top:715.80px;font-size:11.9px;color:#212121;font-weight:normal;">24.01.2025</div>
<div class="t" style="left:772.00px;top:715.80px;font-size:12px;color:#212121;font-weight:normal;letter-spacing:-0.55px;">BLAU</div>
<div class="t" style="right:904.00px;top:715.80px;font-size:12px;color:#212121;font-weight:normal;text-align:right;">1</div>
<div class="t" style="right:807.00px;top:715.80px;font-size:12px;color:#212121;font-weight:normal;text-align:right;">0</div>
<div class="t" style="right:731.40px;top:715.80px;font-size:12px;color:#212121;font-weight:normal;text-align:right;">0</div>
<div class="t" style="right:656.00px;top:715.80px;font-size:12px;color:#212121;font-weight:normal;text-align:right;">1</div>
<div class="t" style="right:564.00px;top:715.80px;font-size:12px;color:#212121;font-weight:normal;text-align:right;">94</div>
<div style="position:absolute;left:59px;top:763px;width:1216px;height:1px;background:#d6d9dd"></div>
<div class="t" style="left:87.00px;top:741.30px;font-size:11.8px;color:#007d85;font-weight:normal;">VAR030</div>
<div class="t" style="left:189.50px;top:741.30px;font-size:12px;color:#212121;font-weight:normal;">D4</div>
<div class="t" style="left:243.00px;top:741.30px;font-size:12.5px;color:#212121;font-weight:normal;">Tourenrad</div>
<svg style="position:absolute;left:433px;top:743.6px" width="15" height="15" viewBox="0 0 15 15"><rect x="0.5" y="0.5" width="14" height="14" fill="#16b516" stroke="#1d5e1d" stroke-width="1"/><path d="M3.6 7.6l2.6 2.6 5.2-5.4" fill="none" stroke="#fff" stroke-width="1.6"/></svg>
<div class="t" style="left:491.50px;top:741.30px;font-size:12.4px;color:#212121;font-weight:normal;">Lieferbar</div>
<div class="t" style="left:691.00px;top:741.30px;font-size:11.9px;color:#212121;font-weight:normal;">24.01.2025</div>
<div class="t" style="left:772.00px;top:741.30px;font-size:12px;color:#212121;font-weight:normal;letter-spacing:-0.55px;">BLAU</div>
<div class="t" style="right:904.00px;top:741.30px;font-size:12px;color:#212121;font-weight:normal;text-align:right;">1</div>
<div class="t" style="right:807.00px;top:741.30px;font-size:12px;color:#212121;font-weight:normal;text-align:right;">0</div>
<div class="t" style="right:731.40px;top:741.30px;font-size:12px;color:#212121;font-weight:normal;text-align:right;">0</div>
<div class="t" style="right:656.00px;top:741.30px;font-size:12px;color:#212121;font-weight:normal;text-align:right;">1</div>
<div class="t" style="right:564.00px;top:741.30px;font-size:12px;color:#212121;font-weight:normal;text-align:right;">94</div>
<div style="position:absolute;left:59px;top:788px;width:1216px;height:1px;background:#d6d9dd"></div>
<div class="t" style="left:87.00px;top:766.80px;font-size:11.8px;color:#007d85;font-weight:normal;">VAR030</div>
<div class="t" style="left:189.50px;top:766.80px;font-size:12px;color:#212121;font-weight:normal;">A6</div>
<div class="t" style="left:243.00px;top:766.80px;font-size:12.5px;color:#212121;font-weight:normal;">Tourenrad A6</div>
<svg style="position:absolute;left:433px;top:769.6px" width="15" height="15" viewBox="0 0 15 15"><rect x="1.4" y="1.4" width="12.4" height="13" fill="#f4f4f4" stroke="#333" stroke-width="1.1"/><rect x="1.95" y="1.95" width="11.3" height="2.9" fill="#f23c12"/><rect x="1.95" y="4.85" width="11.3" height="8.9" fill="#fafafa"/><g fill="#d0d0d0"><rect x="3" y="6.3" width="9" height="0.9"/><rect x="3" y="8.4" width="9" height="0.9"/><rect x="3" y="10.5" width="9" height="0.9"/><rect x="6" y="6" width="0.8" height="5.6"/><rect x="9" y="6" width="0.8" height="5.6"/></g><rect x="3.2" y="8.6" width="2.2" height="2" fill="#f0664a"/></svg>
<div class="t" style="left:491.50px;top:766.80px;font-size:12.4px;color:#212121;font-weight:normal;">Bestellung vorhanden (Rückstand)</div>
<div class="t" style="left:691.00px;top:766.80px;font-size:11.9px;color:#212121;font-weight:normal;">24.01.2025</div>
<div class="t" style="left:772.00px;top:766.80px;font-size:12px;color:#212121;font-weight:normal;letter-spacing:-0.55px;">BLAU</div>
<div class="t" style="right:904.00px;top:766.80px;font-size:12px;color:#212121;font-weight:normal;text-align:right;">0</div>
<div class="t" style="right:807.00px;top:766.80px;font-size:12px;color:#212121;font-weight:normal;text-align:right;">0</div>
<div class="t" style="right:731.40px;top:766.80px;font-size:12px;color:#212121;font-weight:normal;text-align:right;">0</div>
<div class="t" style="right:656.00px;top:766.80px;font-size:12px;color:#212121;font-weight:normal;text-align:right;">0</div>
<div class="t" style="right:564.00px;top:766.80px;font-size:12px;color:#212121;font-weight:normal;text-align:right;">10</div>
<div style="position:absolute;left:59px;top:813px;width:1216px;height:1px;background:#d6d9dd"></div>
<div class="t" style="left:87.00px;top:791.80px;font-size:11.8px;color:#007d85;font-weight:normal;">VAR031</div>
<div class="t" style="left:189.50px;top:791.80px;font-size:12px;color:#212121;font-weight:normal;">D1</div>
<div class="t" style="left:243.00px;top:791.80px;font-size:12.5px;color:#212121;font-weight:normal;">Tourenrad D1</div>
<svg style="position:absolute;left:433px;top:794.6px" width="15" height="15" viewBox="0 0 15 15"><circle cx="7.5" cy="7.5" r="6.9" fill="#e8301c" stroke="#8a1a10" stroke-width="0.8"/><rect x="3.2" y="6.2" width="8.6" height="2.6" fill="#fff"/></svg>
<div class="t" style="left:491.50px;top:791.80px;font-size:12.4px;color:#212121;font-weight:normal;">Beschaffung notwendig</div>
<div class="t" style="left:691.00px;top:791.80px;font-size:11.9px;color:#212121;font-weight:normal;">24.01.2025</div>
<div class="t" style="left:772.00px;top:791.80px;font-size:12px;color:#212121;font-weight:normal;letter-spacing:-0.55px;">BLAU</div>
<div class="t" style="right:904.00px;top:791.80px;font-size:12px;color:#212121;font-weight:normal;text-align:right;">1</div>
<div class="t" style="right:807.00px;top:791.80px;font-size:12px;color:#212121;font-weight:normal;text-align:right;">0</div>
<div class="t" style="right:731.40px;top:791.80px;font-size:12px;color:#212121;font-weight:normal;text-align:right;">0</div>
<div class="t" style="right:656.00px;top:791.80px;font-size:12px;color:#212121;font-weight:normal;text-align:right;">1</div>
<div class="t" style="right:564.00px;top:791.80px;font-size:12px;color:#212121;font-weight:normal;text-align:right;">0</div>
<div style="position:absolute;left:59px;top:838px;width:1216px;height:1px;background:#d6d9dd"></div>
<div class="t" style="left:87.00px;top:816.80px;font-size:11.8px;color:#007d85;font-weight:normal;">VAR031</div>
<div class="t" style="left:189.50px;top:816.80px;font-size:12px;color:#212121;font-weight:normal;">D2</div>
<div class="t" style="left:243.00px;top:816.80px;font-size:12.5px;color:#212121;font-weight:normal;">Tourenrad D2</div>
<svg style="position:absolute;left:433px;top:819.6px" width="15" height="15" viewBox="0 0 15 15"><rect x="1.4" y="1.4" width="12.4" height="13" fill="#f4f4f4" stroke="#333" stroke-width="1.1"/><rect x="1.95" y="1.95" width="11.3" height="2.9" fill="#f23c12"/><rect x="1.95" y="4.85" width="11.3" height="8.9" fill="#fafafa"/><g fill="#d0d0d0"><rect x="3" y="6.3" width="9" height="0.9"/><rect x="3" y="8.4" width="9" height="0.9"/><rect x="3" y="10.5" width="9" height="0.9"/><rect x="6" y="6" width="0.8" height="5.6"/><rect x="9" y="6" width="0.8" height="5.6"/></g><rect x="3.2" y="8.6" width="2.2" height="2" fill="#f0664a"/></svg>
<div class="t" style="left:491.50px;top:816.80px;font-size:12.4px;color:#212121;font-weight:normal;">Bestellung vorhanden</div>
<div class="t" style="left:691.00px;top:816.80px;font-size:11.9px;color:#212121;font-weight:normal;">24.01.2025</div>
<div class="t" style="left:772.00px;top:816.80px;font-size:12px;color:#212121;font-weight:normal;letter-spacing:-0.55px;">BLAU</div>
<div class="t" style="right:904.00px;top:816.80px;font-size:12px;color:#212121;font-weight:normal;text-align:right;">1</div>
<div class="t" style="right:807.00px;top:816.80px;font-size:12px;color:#212121;font-weight:normal;text-align:right;">0</div>
<div class="t" style="right:731.40px;top:816.80px;font-size:12px;color:#212121;font-weight:normal;text-align:right;">0</div>
<div class="t" style="right:656.00px;top:816.80px;font-size:12px;color:#212121;font-weight:normal;text-align:right;">1</div>
<div class="t" style="right:564.00px;top:816.80px;font-size:12px;color:#212121;font-weight:normal;text-align:right;">0</div>
<div style="position:absolute;left:59px;top:864px;width:1216px;height:1px;background:#d6d9dd"></div>
<div class="t" style="left:87.00px;top:842.30px;font-size:11.8px;color:#007d85;font-weight:normal;">VAR031</div>
<div class="t" style="left:189.50px;top:842.30px;font-size:12px;color:#212121;font-weight:normal;">D3</div>
<div class="t" style="left:243.00px;top:842.30px;font-size:12.5px;color:#212121;font-weight:normal;">Tourenrad D3</div>
<svg style="position:absolute;left:433px;top:844.6px" width="15" height="15" viewBox="0 0 15 15"><rect x="1.4" y="1.4" width="12.4" height="13" fill="#f4f4f4" stroke="#333" stroke-width="1.1"/><rect x="1.95" y="1.95" width="11.3" height="2.9" fill="#f23c12"/><rect x="1.95" y="4.85" width="11.3" height="8.9" fill="#fafafa"/><g fill="#d0d0d0"><rect x="3" y="6.3" width="9" height="0.9"/><rect x="3" y="8.4" width="9" height="0.9"/><rect x="3" y="10.5" width="9" height="0.9"/><rect x="6" y="6" width="0.8" height="5.6"/><rect x="9" y="6" width="0.8" height="5.6"/></g><rect x="3.2" y="8.6" width="2.2" height="2" fill="#f0664a"/></svg>
<div class="t" style="left:491.50px;top:842.30px;font-size:12.4px;color:#212121;font-weight:normal;">Bestellung vorhanden (Rückstand)</div>
<div class="t" style="left:691.00px;top:842.30px;font-size:11.9px;color:#212121;font-weight:normal;">24.01.2025</div>
<div class="t" style="left:772.00px;top:842.30px;font-size:12px;color:#212121;font-weight:normal;letter-spacing:-0.55px;">BLAU</div>
<div class="t" style="right:904.00px;top:842.30px;font-size:12px;color:#212121;font-weight:normal;text-align:right;">1</div>
<div class="t" style="right:807.00px;top:842.30px;font-size:12px;color:#212121;font-weight:normal;text-align:right;">0</div>
<div class="t" style="right:731.40px;top:842.30px;font-size:12px;color:#212121;font-weight:normal;text-align:right;">0</div>
<div class="t" style="right:656.00px;top:842.30px;font-size:12px;color:#212121;font-weight:normal;text-align:right;">1</div>
<div class="t" style="right:564.00px;top:842.30px;font-size:12px;color:#212121;font-weight:normal;text-align:right;">0</div>
<div style="position:absolute;left:59px;top:889px;width:1216px;height:1px;background:#d6d9dd"></div>
<div class="t" style="left:87.00px;top:867.80px;font-size:11.8px;color:#007d85;font-weight:normal;">VAR031</div>
<div class="t" style="left:189.50px;top:867.80px;font-size:12px;color:#212121;font-weight:normal;">D4</div>
<div class="t" style="left:243.00px;top:867.80px;font-size:12.5px;color:#212121;font-weight:normal;">Tourenrad D4</div>
<svg style="position:absolute;left:433px;top:870.6px" width="15" height="16" viewBox="0 0 15 16"><rect x="1.1" y="1.4" width="2.6" height="14.4" rx="1.1" fill="#3c3c3c"/><path d="M3.6 2.2c1.2-.7 2.4-.2 3.6.1 1.6.4 3.2.4 6.4 0.2v8.7c-3 .4-5.2.2-6.6-.2-1.2-.3-2.2-.5-3.4 0z" fill="url(#chk)" stroke="#2e2e2e" stroke-width="0.9"/></svg>
<div class="t" style="left:491.50px;top:867.80px;font-size:12.4px;color:#212121;font-weight:normal;">Komplett geliefert</div>
<div class="t" style="left:691.00px;top:867.80px;font-size:11.9px;color:#212121;font-weight:normal;">24.01.2025</div>
<div class="t" style="left:772.00px;top:867.80px;font-size:12px;color:#212121;font-weight:normal;letter-spacing:-0.55px;">BLAU</div>
<div class="t" style="right:904.00px;top:867.80px;font-size:12px;color:#212121;font-weight:normal;text-align:right;">1</div>
<div class="t" style="right:807.00px;top:867.80px;font-size:12px;color:#212121;font-weight:normal;text-align:right;">1</div>
<div class="t" style="right:731.40px;top:867.80px;font-size:12px;color:#212121;font-weight:normal;text-align:right;">0</div>
<div class="t" style="right:656.00px;top:867.80px;font-size:12px;color:#212121;font-weight:normal;text-align:right;">0</div>
<div class="t" style="right:564.00px;top:867.80px;font-size:12px;color:#212121;font-weight:normal;text-align:right;">94</div>
<div style="position:absolute;left:59px;top:914px;width:1216px;height:1px;background:#d6d9dd"></div>
<div class="t" style="left:87.00px;top:892.80px;font-size:11.8px;color:#007d85;font-weight:normal;">VAR031</div>
<div class="t" style="left:189.50px;top:892.80px;font-size:12px;color:#212121;font-weight:normal;">D4</div>
<div class="t" style="left:243.00px;top:892.80px;font-size:12.5px;color:#212121;font-weight:normal;">Tourenrad D4</div>
<svg style="position:absolute;left:433px;top:895.6px" width="15" height="15" viewBox="0 0 15 15"><rect x="0.5" y="0.5" width="14" height="14" fill="#16b516" stroke="#1d5e1d" stroke-width="1"/><path d="M3.6 7.6l2.6 2.6 5.2-5.4" fill="none" stroke="#fff" stroke-width="1.6"/></svg>
<div class="t" style="left:491.50px;top:892.80px;font-size:12.4px;color:#212121;font-weight:normal;">Lieferbar</div>
<div class="t" style="left:691.00px;top:892.80px;font-size:11.9px;color:#212121;font-weight:normal;">24.01.2025</div>
<div class="t" style="left:772.00px;top:892.80px;font-size:12px;color:#212121;font-weight:normal;letter-spacing:-0.55px;">BLAU</div>
<div class="t" style="right:904.00px;top:892.80px;font-size:12px;color:#212121;font-weight:normal;text-align:right;">1</div>
<div class="t" style="right:807.00px;top:892.80px;font-size:12px;color:#212121;font-weight:normal;text-align:right;">0</div>
<div class="t" style="right:731.40px;top:892.80px;font-size:12px;color:#212121;font-weight:normal;text-align:right;">0</div>
<div class="t" style="right:656.00px;top:892.80px;font-size:12px;color:#212121;font-weight:normal;text-align:right;">1</div>
<div class="t" style="right:564.00px;top:892.80px;font-size:12px;color:#212121;font-weight:normal;text-align:right;">94</div>
<div style="position:absolute;left:59px;top:940px;width:1216px;height:1px;background:#d6d9dd"></div>
<div class="t" style="left:87.00px;top:918.30px;font-size:11.8px;color:#007d85;font-weight:normal;">VAR028</div>
<div class="t" style="left:189.50px;top:918.30px;font-size:12px;color:#212121;font-weight:normal;">D2</div>
<div class="t" style="left:243.00px;top:918.30px;font-size:12.5px;color:#212121;font-weight:normal;">Citybike</div>
<svg style="position:absolute;left:433px;top:920.6px" width="15" height="15" viewBox="0 0 15 15"><rect x="1.4" y="1.4" width="12.4" height="13" fill="#f4f4f4" stroke="#333" stroke-width="1.1"/><rect x="1.95" y="1.95" width="11.3" height="2.9" fill="#f23c12"/><rect x="1.95" y="4.85" width="11.3" height="8.9" fill="#fafafa"/><g fill="#d0d0d0"><rect x="3" y="6.3" width="9" height="0.9"/><rect x="3" y="8.4" width="9" height="0.9"/><rect x="3" y="10.5" width="9" height="0.9"/><rect x="6" y="6" width="0.8" height="5.6"/><rect x="9" y="6" width="0.8" height="5.6"/></g><rect x="3.2" y="8.6" width="2.2" height="2" fill="#f0664a"/></svg>
<div class="t" style="left:491.50px;top:918.30px;font-size:12.4px;color:#212121;font-weight:normal;">Bestellung vorhanden</div>
<div class="t" style="left:691.00px;top:918.30px;font-size:11.9px;color:#212121;font-weight:normal;">25.01.2025</div>
<div class="t" style="left:772.00px;top:918.30px;font-size:12px;color:#212121;font-weight:normal;letter-spacing:-0.55px;">BLAU</div>
<div class="t" style="right:904.00px;top:918.30px;font-size:12px;color:#212121;font-weight:normal;text-align:right;">1</div>
<div class="t" style="right:807.00px;top:918.30px;font-size:12px;color:#212121;font-weight:normal;text-align:right;">0</div>
<div class="t" style="right:731.40px;top:918.30px;font-size:12px;color:#212121;font-weight:normal;text-align:right;">0</div>
<div class="t" style="right:656.00px;top:918.30px;font-size:12px;color:#212121;font-weight:normal;text-align:right;">1</div>
<div class="t" style="right:564.00px;top:918.30px;font-size:12px;color:#212121;font-weight:normal;text-align:right;">0</div>
<div style="position:absolute;left:59px;top:965px;width:1216px;height:1px;background:#d6d9dd"></div>
<div class="t" style="left:87.00px;top:943.80px;font-size:11.8px;color:#007d85;font-weight:normal;">VAR012</div>
<div class="t" style="left:189.50px;top:943.80px;font-size:12px;color:#212121;font-weight:normal;">A9</div>
<div class="t" style="left:243.00px;top:943.80px;font-size:12.5px;color:#212121;font-weight:normal;">Test Rückstandsauflösung</div>
<svg style="position:absolute;left:433px;top:946.6px" width="15" height="15" viewBox="0 0 15 15"><rect x="1.4" y="1.4" width="12.4" height="13" fill="#f4f4f4" stroke="#333" stroke-width="1.1"/><rect x="1.95" y="1.95" width="11.3" height="2.9" fill="#f23c12"/><rect x="1.95" y="4.85" width="11.3" height="8.9" fill="#fafafa"/><g fill="#d0d0d0"><rect x="3" y="6.3" width="9" height="0.9"/><rect x="3" y="8.4" width="9" height="0.9"/><rect x="3" y="10.5" width="9" height="0.9"/><rect x="6" y="6" width="0.8" height="5.6"/><rect x="9" y="6" width="0.8" height="5.6"/></g><rect x="3.2" y="8.6" width="2.2" height="2" fill="#f0664a"/></svg>
<div class="t" style="left:491.50px;top:943.80px;font-size:12.4px;color:#212121;font-weight:normal;">Bestellung vorhanden</div>
<div class="t" style="left:691.00px;top:943.80px;font-size:11.9px;color:#212121;font-weight:normal;">29.01.2025</div>
<div class="t" style="left:772.00px;top:943.80px;font-size:12px;color:#212121;font-weight:normal;letter-spacing:-0.55px;">BLAU</div>
<div class="t" style="right:904.00px;top:943.80px;font-size:12px;color:#212121;font-weight:normal;text-align:right;">5</div>
<div class="t" style="right:807.00px;top:943.80px;font-size:12px;color:#212121;font-weight:normal;text-align:right;">0</div>
<div class="t" style="right:731.40px;top:943.80px;font-size:12px;color:#212121;font-weight:normal;text-align:right;">0</div>
<div class="t" style="right:656.00px;top:943.80px;font-size:12px;color:#212121;font-weight:normal;text-align:right;">5</div>
<div class="t" style="right:564.00px;top:943.80px;font-size:12px;color:#212121;font-weight:normal;text-align:right;">0</div>
<div style="position:absolute;left:433.5px;top:428px;width:14.5px;height:2px;background:#1d5e1d"></div>
<div style="position:absolute;left:434.5px;top:428px;width:12.5px;height:1px;background:#16b516"></div>
<div style="position:absolute;left:258.5px;top:428px;width:2px;height:1.2px;background:#333"></div>
<div style="position:absolute;left:434px;top:971px;width:13px;height:1px;background:#777"></div>
<div style="position:absolute;left:1275px;top:428px;width:15px;height:545px;background:#fafafa"></div>
<svg style="position:absolute;left:1276px;top:435px" width="13" height="10" viewBox="0 0 13 10"><path d="M2.5 8.5L6.5 3.5 10.5 8.5z" fill="#8a8a8a"/></svg>
<svg style="position:absolute;left:1276px;top:955.5px" width="13" height="10" viewBox="0 0 13 10"><path d="M2.5 2.5h8L6.5 7z" fill="#8a8a8a"/></svg>
<div style="position:absolute;left:1278px;top:614px;width:9px;height:186px;border-radius:4.5px;background:#8c8c8c"></div>
<div style="position:absolute;left:59px;top:972px;width:1231px;height:16px;background:#fafafa"></div>
<svg style="position:absolute;left:64px;top:974px" width="12" height="12" viewBox="0 0 12 12"><path d="M8.5 1.5v9L3 6z" fill="#8a8a8a"/></svg>
<svg style="position:absolute;left:1272px;top:974px" width="12" height="12" viewBox="0 0 12 12"><path d="M3.5 1.5v9L9 6z" fill="#8a8a8a"/></svg>
<div style="position:absolute;left:82px;top:976px;width:626px;height:9px;border-radius:4.5px;background:#8c8c8c"></div>
<div class="t" style="left:1326.70px;top:204.00px;font-size:14.4px;color:#212121;font-weight:normal;-webkit-text-stroke:0.5px #212121;">Rückstand Details</div>
<div class="t" style="left:1326.70px;top:245.50px;font-size:12.8px;color:#3b4552;font-weight:normal;-webkit-text-stroke:0.25px #3b4552;">Verkaufszeile</div>
<div class="t" style="left:1326.70px;top:267.00px;font-size:12.3px;color:#505c6d;font-weight:normal;">Nr.</div>
<div class="t" style="right:84.00px;top:267.00px;font-size:12.2px;color:#007d85;font-weight:normal;text-align:right;">VAR030</div>
<div class="t" style="left:1326.70px;top:288.00px;font-size:12.3px;color:#505c6d;font-weight:normal;">Auftragsdatum</div>
<div class="t" style="right:84.00px;top:288.00px;font-size:12.2px;color:#212121;font-weight:normal;text-align:right;">23.01.2025</div>
<div class="t" style="left:1326.70px;top:309.00px;font-size:12.3px;color:#505c6d;font-weight:normal;">Einkaufscode</div>
<div class="t" style="left:1326.70px;top:330.00px;font-size:12.3px;color:#505c6d;font-weight:normal;">Geplantes Lieferdatum</div>
<div class="t" style="right:84.00px;top:330.00px;font-size:12.2px;color:#212121;font-weight:normal;text-align:right;">24.01.2025</div>
<div class="t" style="left:1326.70px;top:351.00px;font-size:12.3px;color:#505c6d;font-weight:normal;">Geplantes Warenausgangsdatum</div>
<div class="t" style="right:84.00px;top:351.00px;font-size:12.2px;color:#212121;font-weight:normal;text-align:right;">23.01.2025</div>
<div class="t" style="left:1326.70px;top:372.00px;font-size:12.3px;color:#505c6d;font-weight:normal;">Gewünschtes Lieferdatum</div>
<div class="t" style="left:1326.70px;top:410.50px;font-size:12.8px;color:#3b4552;font-weight:normal;-webkit-text-stroke:0.25px #3b4552;">Artikel</div>
<div class="t" style="left:1326.70px;top:431.50px;font-size:12.3px;color:#505c6d;font-weight:normal;">Nr.</div>
<div class="t" style="right:84.00px;top:431.50px;font-size:12.2px;color:#007d85;font-weight:normal;text-align:right;">D2</div>
<div class="t" style="left:1326.70px;top:452.50px;font-size:12.3px;color:#505c6d;font-weight:normal;">Lagerbestand an Lagerort</div>
<div class="t" style="right:84.00px;top:452.50px;font-size:12.2px;color:#212121;font-weight:normal;text-align:right;">0</div>
<div class="t" style="left:1326.70px;top:473.50px;font-size:12.3px;color:#505c6d;font-weight:normal;">Lagerbestand Total</div>
<div class="t" style="right:84.00px;top:473.50px;font-size:12.2px;color:#212121;font-weight:normal;text-align:right;">0</div>
<div class="t" style="left:1326.70px;top:494.50px;font-size:12.3px;color:#505c6d;font-weight:normal;">Menge in Auftrag</div>
<div class="t" style="right:84.00px;top:494.50px;font-size:12.2px;color:#212121;font-weight:normal;text-align:right;">3</div>
<div class="t" style="left:1326.70px;top:515.50px;font-size:12.3px;color:#505c6d;font-weight:normal;">Menge in Bestellung</div>
<div class="t" style="right:84.00px;top:515.50px;font-size:12.2px;color:#212121;font-weight:normal;text-align:right;">100</div>
<div class="t" style="left:1326.70px;top:555.00px;font-size:12.8px;color:#3b4552;font-weight:normal;-webkit-text-stroke:0.25px #3b4552;">Erste verknüpfte Bestellung</div>
<div class="t" style="left:1326.70px;top:576.00px;font-size:12.3px;color:#505c6d;font-weight:normal;">Bestellungsnr.</div>
<div class="t" style="right:84.00px;top:576.00px;font-size:12.2px;color:#007d85;font-weight:normal;text-align:right;">106029</div>
<div class="t" style="left:1326.70px;top:597.00px;font-size:12.3px;color:#505c6d;font-weight:normal;">Bestellmenge</div>
<div class="t" style="right:84.00px;top:597.00px;font-size:12.2px;color:#212121;font-weight:normal;text-align:right;">100</div>
<div class="t" style="left:1326.70px;top:618.00px;font-size:12.3px;color:#505c6d;font-weight:normal;">Bestellmenge (Basis)</div>
<div class="t" style="right:84.00px;top:618.00px;font-size:12.2px;color:#212121;font-weight:normal;text-align:right;">100</div>
<div class="t" style="left:1326.70px;top:639.00px;font-size:12.3px;color:#505c6d;font-weight:normal;">Restmenge (Basis)</div>
<div class="t" style="right:84.00px;top:639.00px;font-size:12.2px;color:#212121;font-weight:normal;text-align:right;">100</div>
<div class="t" style="left:1326.70px;top:660.00px;font-size:12.3px;color:#505c6d;font-weight:normal;">Reservierte Menge (Basis)</div>
<div class="t" style="right:84.00px;top:660.00px;font-size:12.2px;color:#212121;font-weight:normal;text-align:right;">0</div>
<div class="t" style="left:1326.70px;top:681.00px;font-size:12.3px;color:#505c6d;font-weight:normal;">Zug. Wareneingangsdatum</div>
<div class="t" style="left:1326.70px;top:702.00px;font-size:12.3px;color:#505c6d;font-weight:normal;">Erw. Wareneingangsdatum</div>
<div class="t" style="right:84.00px;top:702.00px;font-size:12.2px;color:#212121;font-weight:normal;text-align:right;">23.01.2025</div>
<div class="t" style="left:1326.70px;top:741.00px;font-size:12.8px;color:#3b4552;font-weight:normal;-webkit-text-stroke:0.25px #3b4552;">Auftraggeber</div>
<div class="t" style="left:1326.70px;top:762.00px;font-size:12.3px;color:#505c6d;font-weight:normal;">Debitornr.</div>
<div class="t" style="right:84.00px;top:762.00px;font-size:12.2px;color:#007d85;font-weight:normal;text-align:right;">10000</div>
<div class="t" style="left:1326.70px;top:783.00px;font-size:12.3px;color:#505c6d;font-weight:normal;">Name</div>
<div class="t" style="right:84.00px;top:783.00px;font-size:12.7px;color:#212121;font-weight:normal;text-align:right;">Möbel Meller</div>
<div class="t" style="left:1326.70px;top:804.00px;font-size:12.3px;color:#505c6d;font-weight:normal;">Ort</div>
<div class="t" style="right:84.00px;top:804.00px;font-size:12.7px;color:#212121;font-weight:normal;text-align:right;">Luzern</div>
<div class="t" style="left:1326.70px;top:825.00px;font-size:12.3px;color:#505c6d;font-weight:normal;">Länder-/Regionscode</div>
<div class="t" style="right:84.00px;top:825.00px;font-size:12.7px;color:#212121;font-weight:normal;text-align:right;">CH</div>
<svg style="position:absolute;left:0px;top:842px" width="10" height="18" viewBox="0 0 10 18"><path d="M-3 1v13l3-3 2 5 2-1-2-5h4z" fill="#fff" stroke="#222" stroke-width="1"/></svg>
</body></html>
